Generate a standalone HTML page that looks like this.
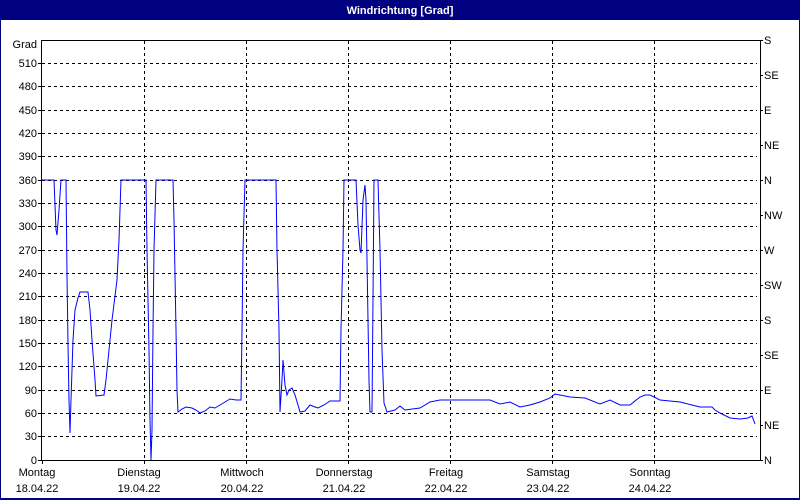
<!DOCTYPE html>
<html><head><meta charset="utf-8"><style>
html,body{margin:0;padding:0;background:#fff;width:800px;height:500px;overflow:hidden}
svg{display:block;font-family:"Liberation Sans",sans-serif;font-size:11px}
</style></head><body>
<svg width="800" height="500" viewBox="0 0 800 500">
<rect x="0" y="0" width="800" height="500" fill="#000080"/>
<rect x="1" y="20" width="798" height="478" fill="#fff"/>
<text x="400" y="14" fill="#fff" font-weight="bold" text-anchor="middle">Windrichtung [Grad]</text>
<g stroke="#000" stroke-dasharray="3,3" stroke-width="1">
<line x1="42" y1="63.5" x2="757" y2="63.5"/><line x1="42" y1="86.5" x2="757" y2="86.5"/><line x1="42" y1="110.5" x2="757" y2="110.5"/><line x1="42" y1="133.5" x2="757" y2="133.5"/><line x1="42" y1="156.5" x2="757" y2="156.5"/><line x1="42" y1="180.5" x2="757" y2="180.5"/><line x1="42" y1="203.5" x2="757" y2="203.5"/><line x1="42" y1="226.5" x2="757" y2="226.5"/><line x1="42" y1="250.5" x2="757" y2="250.5"/><line x1="42" y1="273.5" x2="757" y2="273.5"/><line x1="42" y1="296.5" x2="757" y2="296.5"/><line x1="42" y1="320.5" x2="757" y2="320.5"/><line x1="42" y1="343.5" x2="757" y2="343.5"/><line x1="42" y1="366.5" x2="757" y2="366.5"/><line x1="42" y1="390.5" x2="757" y2="390.5"/><line x1="42" y1="413.5" x2="757" y2="413.5"/><line x1="42" y1="436.5" x2="757" y2="436.5"/>
<line x1="144.5" y1="41" x2="144.5" y2="466"/><line x1="246.5" y1="41" x2="246.5" y2="466"/><line x1="348.5" y1="41" x2="348.5" y2="466"/><line x1="450.5" y1="41" x2="450.5" y2="466"/><line x1="552.5" y1="41" x2="552.5" y2="466"/><line x1="654.5" y1="41" x2="654.5" y2="466"/>
</g>
<g stroke="#000" stroke-width="1" fill="none">
<path d="M41.5 40 V460.5 H760.5 V40.5 H41.5"/>
<path d="M38 63.5h4M38 86.5h4M38 110.5h4M38 133.5h4M38 156.5h4M38 180.5h4M38 203.5h4M38 226.5h4M38 250.5h4M38 273.5h4M38 296.5h4M38 320.5h4M38 343.5h4M38 366.5h4M38 390.5h4M38 413.5h4M38 436.5h4M38 460.5h4"/>
<path d="M760 40.5h3M760 75.5h3M760 110.5h3M760 145.5h3M760 180.5h3M760 215.5h3M760 250.5h3M760 285.5h3M760 320.5h3M760 355.5h3M760 390.5h3M760 425.5h3M760 460.5h3"/>
<path d="M42.5 460v4M144.5 460v4M246.5 460v4M348.5 460v4M450.5 460v4M552.5 460v4M654.5 460v4"/>
</g>
<polyline fill="none" stroke="#0000ff" stroke-width="1" points="42,180 54,180 56,230 57,235 59,210 61,180 66,180 67,275 68,345 69,400 70,433 71,400 73,340 75,310 78,298 80,292 88,292 90,310 92,340 95,380 96,396 104,395 106,380 109,350 112,320 117,280 119,240 121,180 146,180 147,250 149,350 150,420 151,460 152,430 153,330 154,250 156,180 173,180 174,220 176,330 177,390 178,412 182,409 186,407 192,408 196,410 200,413 205,411 210,407 215,408 220,405 225,402 230,399 236,400 241,400 242,330 243,250 245,180 276,180 277,250 279,330 280,412 282,380 283,360 285,385 287,395 289,390 292,388 295,395 298,405 300,412 305,411 310,405 315,407 318,408 324,405 330,401 340,401 341,330 343,250 344,180 356,180 358,225 360,250 361,253 363,200 365,185 366,200 367,260 369,380 370,412 372,412 373,300 374,180 378,180 380,250 382,350 384,403 387,412 395,410 400,406 405,410 420,408 430,402 440,400 460,400 490,400 500,404 510,402 520,407 530,405 540,402 550,398 555,394 570,397 585,398 600,404 610,400 620,405 630,405 640,397 645,395 650,395 660,400 680,402 700,407 712,407 715,410 720,413 730,418 740,419 748,418 752,416 755,424"/>
<g fill="#000" text-anchor="end">
<text x="37" y="48">Grad</text><text x="37" y="67">510</text><text x="37" y="90">480</text><text x="37" y="114">450</text><text x="37" y="137">420</text><text x="37" y="160">390</text><text x="37" y="184">360</text><text x="37" y="207">330</text><text x="37" y="230">300</text><text x="37" y="254">270</text><text x="37" y="277">240</text><text x="37" y="300">210</text><text x="37" y="324">180</text><text x="37" y="347">150</text><text x="37" y="370">120</text><text x="37" y="394">90</text><text x="37" y="417">60</text><text x="37" y="440">30</text><text x="37" y="464">0</text>
</g>
<g fill="#000">
<text x="764" y="44">S</text><text x="764" y="79">SE</text><text x="764" y="114">E</text><text x="764" y="149">NE</text><text x="764" y="184">N</text><text x="764" y="219">NW</text><text x="764" y="254">W</text><text x="764" y="289">SW</text><text x="764" y="324">S</text><text x="764" y="359">SE</text><text x="764" y="394">E</text><text x="764" y="429">NE</text><text x="764" y="464">N</text>
</g>
<g fill="#000" text-anchor="middle">
<text x="37" y="476">Montag</text><text x="37" y="492">18.04.22</text>
<text x="139" y="476">Dienstag</text><text x="139" y="492">19.04.22</text>
<text x="242" y="476">Mittwoch</text><text x="242" y="492">20.04.22</text>
<text x="344" y="476">Donnerstag</text><text x="344" y="492">21.04.22</text>
<text x="446" y="476">Freitag</text><text x="446" y="492">22.04.22</text>
<text x="548" y="476">Samstag</text><text x="548" y="492">23.04.22</text>
<text x="650" y="476">Sonntag</text><text x="650" y="492">24.04.22</text>
</g>
</svg>
</body></html>
